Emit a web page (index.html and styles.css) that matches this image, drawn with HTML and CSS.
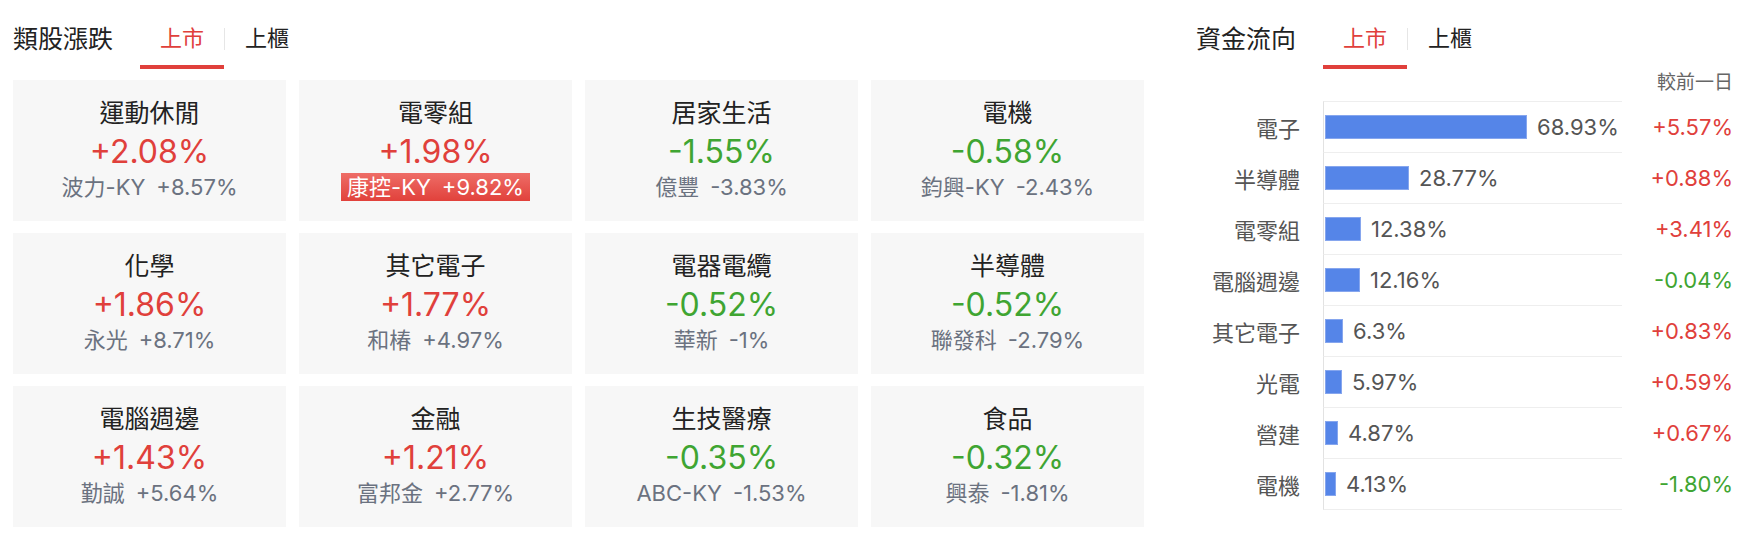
FILE: index.html
```html
<!DOCTYPE html>
<html lang="zh-Hant">
<head>
    <meta charset="UTF-8">
    <meta name="viewport" content="width=device-width, initial-scale=1.0">
    <title>類股漲跌 / 資金流向</title>
    <link rel="stylesheet" href="styles.css">
</head>
<body>

<div class="page">

    <!-- 類股漲跌 -->
    <section class="sector-panel">
        <div class="panel-head">
            <h2 class="panel-title">類股漲跌</h2>
            <div class="tabs">
                <a class="tab active">上市</a>
                <span class="tab-sep"></span>
                <a class="tab">上櫃</a>
            </div>
        </div>

        <div class="sector-grid">
            <div class="sector-card">
                <div class="sector-name">運動休閒</div>
                <div class="sector-pct up">+2.08%</div>
                <div class="sector-lead"><span>波力-KY</span><span class="lead-pct">+8.57%</span></div>
            </div>
            <div class="sector-card">
                <div class="sector-name">電零組</div>
                <div class="sector-pct up">+1.98%</div>
                <div class="sector-lead limit"><span>康控-KY</span><span class="lead-pct">+9.82%</span></div>
            </div>
            <div class="sector-card">
                <div class="sector-name">居家生活</div>
                <div class="sector-pct down">-1.55%</div>
                <div class="sector-lead"><span>億豐</span><span class="lead-pct">-3.83%</span></div>
            </div>
            <div class="sector-card">
                <div class="sector-name">電機</div>
                <div class="sector-pct down">-0.58%</div>
                <div class="sector-lead"><span>鈞興-KY</span><span class="lead-pct">-2.43%</span></div>
            </div>

            <div class="sector-card">
                <div class="sector-name">化學</div>
                <div class="sector-pct up">+1.86%</div>
                <div class="sector-lead"><span>永光</span><span class="lead-pct">+8.71%</span></div>
            </div>
            <div class="sector-card">
                <div class="sector-name">其它電子</div>
                <div class="sector-pct up">+1.77%</div>
                <div class="sector-lead"><span>和椿</span><span class="lead-pct">+4.97%</span></div>
            </div>
            <div class="sector-card">
                <div class="sector-name">電器電纜</div>
                <div class="sector-pct down">-0.52%</div>
                <div class="sector-lead"><span>華新</span><span class="lead-pct">-1%</span></div>
            </div>
            <div class="sector-card">
                <div class="sector-name">半導體</div>
                <div class="sector-pct down">-0.52%</div>
                <div class="sector-lead"><span>聯發科</span><span class="lead-pct">-2.79%</span></div>
            </div>

            <div class="sector-card">
                <div class="sector-name">電腦週邊</div>
                <div class="sector-pct up">+1.43%</div>
                <div class="sector-lead"><span>勤誠</span><span class="lead-pct">+5.64%</span></div>
            </div>
            <div class="sector-card">
                <div class="sector-name">金融</div>
                <div class="sector-pct up">+1.21%</div>
                <div class="sector-lead"><span>富邦金</span><span class="lead-pct">+2.77%</span></div>
            </div>
            <div class="sector-card">
                <div class="sector-name">生技醫療</div>
                <div class="sector-pct down">-0.35%</div>
                <div class="sector-lead"><span>ABC-KY</span><span class="lead-pct">-1.53%</span></div>
            </div>
            <div class="sector-card">
                <div class="sector-name">食品</div>
                <div class="sector-pct down">-0.32%</div>
                <div class="sector-lead"><span>興泰</span><span class="lead-pct">-1.81%</span></div>
            </div>
        </div>
    </section>

    <!-- 資金流向 -->
    <section class="flow-panel">
        <div class="panel-head">
            <h2 class="panel-title">資金流向</h2>
            <div class="tabs">
                <a class="tab active">上市</a>
                <span class="tab-sep"></span>
                <a class="tab">上櫃</a>
            </div>
        </div>

        <div class="flow-note">較前一日</div>

        <div class="flow-chart">
            <div class="flow-row">
                <div class="flow-label">電子</div>
                <div class="flow-plot"><span class="flow-bar" style="width: 202px"></span><span class="flow-val">68.93%</span></div>
                <div class="flow-chg up">+5.57%</div>
            </div>
            <div class="flow-row">
                <div class="flow-label">半導體</div>
                <div class="flow-plot"><span class="flow-bar" style="width: 84px"></span><span class="flow-val">28.77%</span></div>
                <div class="flow-chg up">+0.88%</div>
            </div>
            <div class="flow-row">
                <div class="flow-label">電零組</div>
                <div class="flow-plot"><span class="flow-bar" style="width: 36px"></span><span class="flow-val">12.38%</span></div>
                <div class="flow-chg up">+3.41%</div>
            </div>
            <div class="flow-row">
                <div class="flow-label">電腦週邊</div>
                <div class="flow-plot"><span class="flow-bar" style="width: 35px"></span><span class="flow-val">12.16%</span></div>
                <div class="flow-chg down">-0.04%</div>
            </div>
            <div class="flow-row">
                <div class="flow-label">其它電子</div>
                <div class="flow-plot"><span class="flow-bar" style="width: 18px"></span><span class="flow-val">6.3%</span></div>
                <div class="flow-chg up">+0.83%</div>
            </div>
            <div class="flow-row">
                <div class="flow-label">光電</div>
                <div class="flow-plot"><span class="flow-bar" style="width: 17px"></span><span class="flow-val">5.97%</span></div>
                <div class="flow-chg up">+0.59%</div>
            </div>
            <div class="flow-row">
                <div class="flow-label">營建</div>
                <div class="flow-plot"><span class="flow-bar" style="width: 13px"></span><span class="flow-val">4.87%</span></div>
                <div class="flow-chg up">+0.67%</div>
            </div>
            <div class="flow-row">
                <div class="flow-label">電機</div>
                <div class="flow-plot"><span class="flow-bar" style="width: 11px"></span><span class="flow-val">4.13%</span></div>
                <div class="flow-chg down">-1.80%</div>
            </div>
        </div>
    </section>

</div>

</body>
</html>
```

FILE: styles.css
```css
body {
    margin: 0;
    background-color: #fff;
    color: #222;
    font-family: "Inter", "Noto Sans CJK TC", sans-serif;
}

.page {
    display: flex;
    padding: 0 15px 0 13px;
}

/* shared header: title + market tabs */
.panel-head {
    display: flex;
    align-items: flex-start;
    padding-top: 23px;
}
.panel-title {
    margin: 0 27px 0 0;
    font-size: 25px;
    font-weight: 400;
    line-height: 32px;
    color: #222;
}
.tabs {
    display: flex;
    align-items: flex-start;
}
.tab {
    font-size: 22px;
    line-height: 30px;
    padding: 0 20px 12px;
    border-bottom: 4px solid transparent;
    color: #222;
    cursor: pointer;
}
.tab.active {
    color: #e0403b;
    border-bottom-color: #e0403b;
}
.tab-sep {
    width: 1px;
    height: 22px;
    margin-top: 5px;
    background-color: #e6e6e6;
}

.up { color: #e0403b; }
.down { color: #3fa532; }

/* sector cards */
.sector-panel {
    width: 1131px;
}
.sector-grid {
    margin-top: 11px;
    display: grid;
    grid-template-columns: repeat(4, 273px);
    grid-auto-rows: 141px;
    column-gap: 13px;
    row-gap: 12px;
}
.sector-card {
    background-color: #f7f7f7;
    display: flex;
    flex-direction: column;
    align-items: center;
    padding-top: 14px;
    box-sizing: border-box;
}
.sector-name {
    font-size: 25px;
    line-height: 39px;
    color: #222;
}
.sector-pct {
    font-size: 32px;
    line-height: 37px;
}
.sector-lead {
    font-size: 22px;
    line-height: 34px;
    color: #6b7280;
}
.lead-pct {
    margin-left: 11px;
}
.sector-lead.limit {
    margin-top: 3px;
    padding: 0 6px;
    line-height: 28px;
    color: #fff;
    background: linear-gradient(180deg, #ee6d67 0%, #e1413b 100%);
}

/* fund flow chart */
.flow-panel {
    width: 537px;
    margin-left: 52px;
}
.flow-note {
    height: 32px;
    font-size: 19px;
    line-height: 28px;
    text-align: right;
    color: #666;
}
.flow-row {
    display: grid;
    grid-template-columns: 127px 299px 111px;
}
.flow-label {
    align-self: center;
    padding-right: 23px;
    text-align: right;
    font-size: 22px;
    color: #555;
}
.flow-plot {
    height: 50px;
    display: flex;
    align-items: center;
    border-top: 1px solid #eee;
    border-left: 1px solid #e2e2e2;
}
.flow-row:last-child .flow-plot {
    border-bottom: 1px solid #eee;
}
.flow-bar {
    height: 24px;
    margin-left: 1px;
    box-sizing: border-box;
    background-color: #5585e8;
    border: 1px solid #86a6ee;
}
.flow-val {
    margin-left: 10px;
    font-size: 22px;
    color: #555;
}
.flow-chg {
    align-self: center;
    text-align: right;
    font-size: 22px;
}
```
